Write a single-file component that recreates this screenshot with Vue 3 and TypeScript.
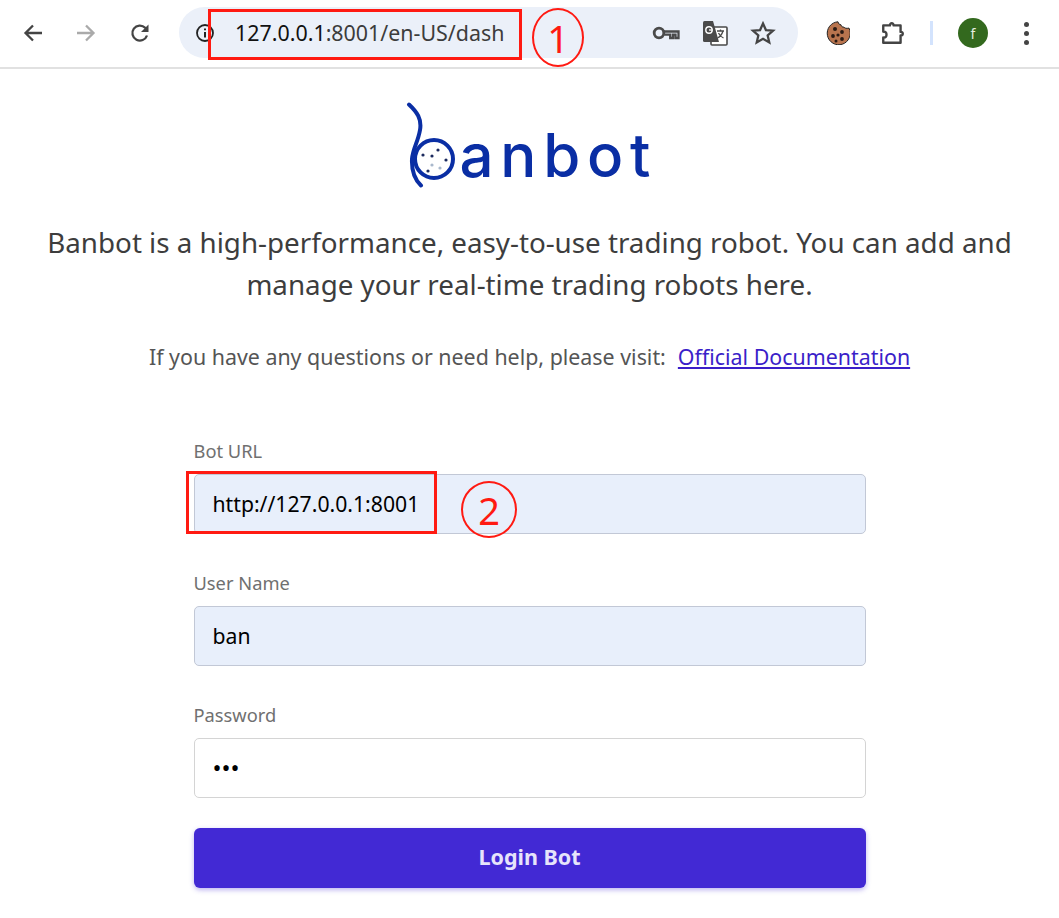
<script setup lang="ts">
interface Field { label: string; value: string; type: string; filled: boolean }
const fields: Field[] = [
  { label: 'Bot URL', value: 'http://127.0.0.1:8001', type: 'text', filled: true },
  { label: 'User Name', value: 'ban', type: 'text', filled: true },
  { label: 'Password', value: 'ban', type: 'password', filled: false },
]
const dots: [number, number, string][] = [
  [18, 55, '#1b2a5e'], [33, 50, '#1b2a5e'], [27, 56, '#1b2a5e'], [41, 60, '#1b2a5e'],
  [27, 65, '#a9b8cc'], [35, 68, '#a9b8cc'], [23, 71, '#1b2a5e'],
]
</script>

<template>
  <div class="page">
    <header class="toolbar">
      <div class="nav">
        <svg class="ico" viewBox="0 0 24 24"><path d="M21 12H5M12 4.500L4.500 12l7.500 7.500" fill="none" stroke="#444" stroke-width="2.300"/></svg>
        <svg class="ico" viewBox="0 0 24 24"><path d="M3 12h16M12 4.500l7.500 7.500-7.500 7.500" fill="none" stroke="#aaa" stroke-width="2.300"/></svg>
        <svg class="ico reload" viewBox="0 0 24 24"><path d="M19 14.500A7.500 7.500 0 1 1 17.200 6.800L19.200 8.800" fill="none" stroke="#444" stroke-width="2.300"/><path d="M20.500 3.500v7.500H13z" fill="#444"/></svg>
      </div>
      <div class="omnibox">
        <svg class="info" viewBox="0 0 20 20"><circle cx="10" cy="10" r="8" fill="none" stroke="#222" stroke-width="1.800"/><path d="M10 9v5.500M10 5.500v1.800" stroke="#222" stroke-width="2"/></svg>
        <span class="url"><b>127.0.0.1</b>:8001/en-US/dash</span>
        <div class="omni-actions">
          <svg class="key" viewBox="0 0 28 16"><circle cx="7" cy="8" r="4.800" fill="none" stroke="#4a4a4a" stroke-width="2.800"/><path d="M12 6.500H26.500V13h-3V9.600H21V13h-2.800V9.600h-6" fill="none" stroke="#4a4a4a" stroke-width="2.300"/></svg>
          <svg class="ico tr" viewBox="0 0 26 26"><rect x="9" y="7" width="16" height="18" rx="1" fill="#fff" stroke="#4a4a4a" stroke-width="1.600"/><path d="M1 2.500Q1 1 2.500 1H11l6 21H2.500Q1 22 1 20.500z" fill="#4a4a4a"/><circle cx="7" cy="10" r="3.200" fill="none" stroke="#fff" stroke-width="1.400"/><path d="M7 10h3.400" stroke="#fff" stroke-width="1.300"/><path d="M15 11h7M18.500 9.500v1.500M21 11q-1.500 5-5.500 7M16.500 13q1.500 3.500 5 5" fill="none" stroke="#4a4a4a" stroke-width="1.300"/></svg>
          <svg class="ico star" viewBox="0 0 24 24"><path d="M12 3.200l2.700 6.100 6.600.6-5 4.400 1.500 6.500L12 17.400l-5.800 3.400 1.500-6.500-5-4.400 6.600-.6z" fill="none" stroke="#444" stroke-width="2.100"/></svg>
        </div>
      </div>
      <div class="tools">
        <svg class="cookie" viewBox="0 0 24 24"><path d="M12 .8c.4 2 1.500 2.900 3 3 .3 1.800 1.500 2.600 3 2.300 .9 1.200 2.300 1.500 5 1A11.500 11.500 0 1 1 12 .8z" fill="#b9744e" stroke="#222" stroke-width="1"/><circle cx="9" cy="8" r="2" fill="#2a1a14"/><circle cx="16" cy="11" r="1.900" fill="#2a1a14"/><circle cx="7" cy="15" r="1.900" fill="#2a1a14"/><circle cx="12" cy="14" r="1.600" fill="#2a1a14"/><circle cx="16" cy="18" r="1.900" fill="#2a1a14"/><circle cx="10" cy="20" r="1.500" fill="#2a1a14"/></svg>
        <svg class="ico puzzle" viewBox="0 0 24 24"><path d="M3 5h6.200c-.3-2.600 3.600-2.600 3.300 0H19v6c2.700-.3 2.700 3.600 0 3.300V21H3v-4.800c2.500.3 3-1.400 3-2.700S5.500 10.500 3 10.800z" fill="none" stroke="#444" stroke-width="2.200" stroke-linejoin="round"/></svg>
        <span class="sep"></span>
        <span class="avatar">f</span>
        <span class="menu"><i></i><i></i><i></i></span>
      </div>
    </header>

    <main class="content">
      <div class="logo" role="img" aria-label="banbot">
        <svg class="mark" width="50" height="88" viewBox="0 0 50 88">
          <path d="M4 4.500C12 12 17 19 15 30C13 42 8 48 7 59C6.500 70 9 79 16 85.500" fill="none" stroke="#0a2ea4" stroke-width="4" stroke-linecap="round"/>
          <circle cx="29" cy="59" r="19" fill="none" stroke="#0a2ea4" stroke-width="4"/>
          <circle v-for="(d, i) in dots" :key="i" :cx="d[0]" :cy="d[1]" r="1.600" :fill="d[2]"/>
        </svg>
        <span class="word">anbot</span>
      </div>

      <h1 class="title">Banbot is a high-performance, easy-to-use trading robot. You can add and manage your real-time trading robots here.</h1>
      <p class="help">If you have any questions or need help, please visit:<a class="doc" href="#">Official Documentation</a></p>

      <form class="form" @submit.prevent>
        <div v-for="f in fields" :key="f.label" class="field">
          <label class="label">{{ f.label }}</label>
          <input class="input" :class="{ filled: f.filled }" :type="f.type" :value="f.value" readonly />
        </div>
        <button class="login" type="button">Login Bot</button>
      </form>
    </main>

    <div class="mark-box box1"></div>
    <div class="mark-circle c1">1</div>
    <div class="mark-box box2"></div>
    <div class="mark-circle c2">2</div>
  </div>
</template>

<style scoped>
.page {
  position: relative;
  width: 1059px;
  height: 918px;
  overflow: hidden;
  background: #fff;
  font-family: "Noto Sans", "Open Sans", sans-serif;
}
.toolbar {
  height: 67px;
  border-bottom: 2px solid #e1e1e1;
  display: flex;
  align-items: flex-start;
}
.nav {
  display: flex;
  gap: 29px;
  padding: 21px 0 0 21px;
  width: 158px;
  box-sizing: border-box;
  flex: none;
}
.ico { width: 24px; height: 24px; flex: none; display: block; }
.reload { margin-left: 1px; }
.omnibox {
  width: 619px;
  height: 51px;
  border-radius: 26px;
  background: #ebf0f9;
  display: flex;
  align-items: center;
  flex: none;
  margin: 7px 0 0 21px;
  padding-left: 16px;
  box-sizing: border-box;
}
.info { width: 20px; height: 20px; flex: none; }
.url {
  margin-left: 20px;
  font-size: 21.4px;
  color: #3c3c3c;
  white-space: nowrap;
  flex: none;
}
.url b { font-weight: 400; color: #111; }
.omni-actions {
  margin-left: auto;
  display: flex;
  align-items: center;
  gap: 22px;
  padding-right: 22px;
}
.key { width: 28px; height: 16px; }
.tr { width: 26px; height: 26px; }
.star { width: 26px; height: 26px; }
.tools {
  display: flex;
  align-items: center;
  height: 66px;
  flex: none;
  padding-left: 28px;
}
.cookie { width: 24px; height: 24px; }
.puzzle { margin-left: 30px; width: 26px; height: 26px; }
.sep { width: 3px; height: 24px; background: #d3e3fd; margin-left: 24px; }
.avatar {
  width: 30px;
  height: 30px;
  border-radius: 50%;
  background: #33691e;
  color: #e5efe0;
  font-size: 14px;
  display: flex;
  align-items: center;
  justify-content: center;
  margin-left: 25px;
}
.menu {
  display: flex;
  flex-direction: column;
  gap: 4px;
  margin-left: 36px;
}
.menu i { width: 5px; height: 5px; border-radius: 50%; background: #444; display: block; }

.content {
  display: flex;
  flex-direction: column;
  align-items: center;
}
.logo {
  display: flex;
  align-items: flex-end;
  height: 88px;
  margin-top: 31px;
  width: 250px;
}
.mark { flex: none; }
.word {
  font-family: Inter, sans-serif;
  font-size: 60px;
  font-weight: 500;
  line-height: 70px;
  letter-spacing: 6.75px;
  color: #0a2ea4;
  margin: 0 0 -2px 5px;
  white-space: nowrap;
}
.title {
  margin: 33px 0 0;
  width: 1000px;
  text-align: center;
  font-size: 27.75px;
  font-weight: 400;
  line-height: 42px;
  color: #3d3d3d;
}
.help {
  margin: 37px 0 0;
  font-size: 21.4px;
  line-height: 30px;
  color: #555;
  white-space: nowrap;
}
.doc { color: #3b1fc9; margin-left: 12px; }
.form {
  width: 672px;
  margin-top: 67px;
  display: flex;
  flex-direction: column;
}
.field { display: flex; flex-direction: column; margin-bottom: 37px; }
.field:last-of-type { margin-bottom: 30px; }
.label {
  font-size: 18.3px;
  line-height: 24px;
  height: 24px;
  margin-bottom: 11px;
  color: #707070;
}
.input {
  height: 60px;
  box-sizing: border-box;
  border: 1px solid #d4d4d4;
  border-radius: 5px;
  background: #fff;
  padding: 0 18px 2px;
  font-family: inherit;
  font-size: 24px;
  color: #000;
  outline: none;
  margin: 0;
}
.input.filled { background: #e8effb; border-color: #c2c8d6; font-size: 21.2px; }
.login {
  height: 60px;
  border: 0;
  border-radius: 6px;
  background: #4229d4;
  color: #e6e4fb;
  font-family: inherit;
  font-size: 21.5px;
  font-weight: 700;
  padding: 0 0 4px;
  box-shadow: 0 2px 5px rgba(66, 41, 212, 0.35);
}

.mark-box {
  position: absolute;
  border: 3px solid #ff1a12;
  box-sizing: border-box;
}
.box1 { left: 208px; top: 9px; width: 314px; height: 51px; }
.box2 { left: 186px; top: 471px; width: 251px; height: 63px; }
.mark-circle {
  position: absolute;
  border: 2.5px solid #ff1a12;
  border-radius: 50%;
  box-sizing: border-box;
  color: #ff1a12;
  display: flex;
  align-items: center;
  justify-content: center;
  font-family: "Noto Sans", sans-serif;
  font-weight: 400;
  font-size: 38px;
}
.c1 { left: 532px; top: 8px; width: 52px; height: 59px; }
.c2 { left: 461px; top: 481px; width: 56px; height: 57px; }
</style>
